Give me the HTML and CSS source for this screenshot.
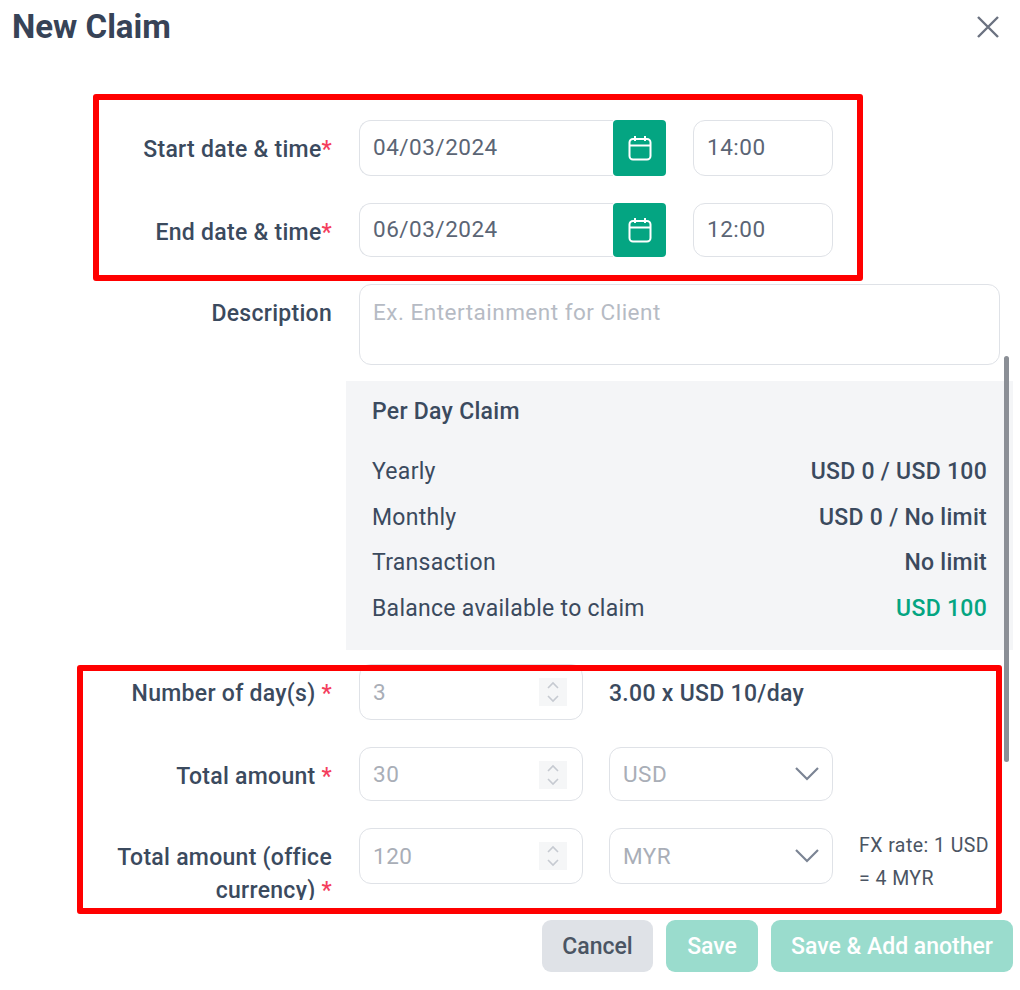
FILE: index.html
```html
<!DOCTYPE html>
<html lang="en">
<head>
  <meta charset="utf-8">
  <title>New Claim</title>
  <link rel="stylesheet" href="styles.css">
</head>
<body>
  <div class="modal">
    <header class="modal-head">
      <h1>New Claim</h1>
      <svg class="close" width="24" height="24" viewBox="0 0 24 24"><path d="M2 2L22 22M22 2L2 22"/></svg>
    </header>

    <main class="modal-body">
      <div class="row">
        <div class="label">Start date &amp; time<span class="req">*</span></div>
        <div class="date">
          <div class="field date-text">04/03/2024</div>
          <div class="cal-btn">
            <svg width="26" height="28" viewBox="0 0 26 28"><rect x="2.5" y="5" width="21" height="20.5" rx="3.5"/><path d="M2.5 11.5H23.5M8 2V7M18 2V7"/></svg>
          </div>
        </div>
        <div class="field time">14:00</div>
      </div>

      <div class="row short">
        <div class="label">End date &amp; time<span class="req">*</span></div>
        <div class="date">
          <div class="field date-text">06/03/2024</div>
          <div class="cal-btn">
            <svg width="26" height="28" viewBox="0 0 26 28"><rect x="2.5" y="5" width="21" height="20.5" rx="3.5"/><path d="M2.5 11.5H23.5M8 2V7M18 2V7"/></svg>
          </div>
        </div>
        <div class="field time">12:00</div>
      </div>

      <div class="row desc-row">
        <div class="label">Description</div>
        <div class="field textarea">Ex. Entertainment for Client</div>
      </div>

      <section class="summary">
        <h2>Per Day Claim</h2>
        <div class="summary-row"><span>Yearly</span><b>USD 0 / USD 100</b></div>
        <div class="summary-row"><span>Monthly</span><b>USD 0 / No limit</b></div>
        <div class="summary-row"><span>Transaction</span><b>No limit</b></div>
        <div class="summary-row"><span>Balance available to claim</span><b class="green">USD 100</b></div>
      </section>

      <div class="row">
        <div class="label">Number of day(s) <span class="req">*</span></div>
        <div class="field number disabled">3
          <span class="stepper"><svg width="16" height="24" viewBox="0 0 16 24"><path d="M3 8L8 3L13 8M3 16L8 21L13 16"/></svg></span>
        </div>
        <div class="rate">3.00 x USD 10/day</div>
      </div>

      <div class="row short">
        <div class="label">Total amount <span class="req">*</span></div>
        <div class="field number disabled">30
          <span class="stepper"><svg width="16" height="24" viewBox="0 0 16 24"><path d="M3 8L8 3L13 8M3 16L8 21L13 16"/></svg></span>
        </div>
        <div class="field select disabled">USD
          <svg width="26" height="16" viewBox="0 0 26 16"><path d="M2 2L13 13L24 2"/></svg>
        </div>
      </div>

      <div class="row">
        <div class="label">Total amount (office currency) <span class="req">*</span></div>
        <div class="field number disabled">120
          <span class="stepper"><svg width="16" height="24" viewBox="0 0 16 24"><path d="M3 8L8 3L13 8M3 16L8 21L13 16"/></svg></span>
        </div>
        <div class="field select disabled">MYR
          <svg width="26" height="16" viewBox="0 0 26 16"><path d="M2 2L13 13L24 2"/></svg>
        </div>
        <div class="fx">FX rate: 1 USD = 4 MYR</div>
      </div>
    </main>

    <footer class="modal-foot">
      <div class="btn cancel">Cancel</div>
      <div class="btn save">Save</div>
      <div class="btn save wide">Save &amp; Add another</div>
    </footer>

    <div class="scrollbar"></div>
    <div class="mark mark-dates"></div>
    <div class="mark mark-amounts"></div>
  </div>
</body>
</html>
```

FILE: styles.css
```css
* {
  box-sizing: border-box;
}

body {
  margin: 0;
  background: #fff;
  font-family: Roboto, "Liberation Sans", sans-serif;
  color: #3b4a5e;
}

.modal {
  position: relative;
  height: 990px;
  overflow: hidden;
}

.modal-head {
  height: 120px;
  padding: 7px 20px 0 12px;
  display: flex;
  justify-content: space-between;
  align-items: flex-start;
}

.modal-head h1 {
  margin: 0;
  font-size: 33px;
  line-height: 40px;
  font-weight: 700;
  color: #374357;
}

.close {
  margin-top: 8px;
}

.close path {
  fill: none;
  stroke: #6b7280;
  stroke-width: 2.4;
}

.modal-body {
  height: 780px;
  overflow: hidden;
  padding-left: 100px;
}

.row {
  display: flex;
  gap: 26px;
  height: 56px;
  margin-bottom: 27px;
}

.row.short {
  height: 54px;
}

.row .label {
  flex: none;
  width: 232px;
  margin-right: 1px;
  padding-top: 13px;
  font-size: 23px;
  line-height: 33px;
  letter-spacing: 0.28px;
  font-weight: 500;
  text-align: right;
}

.req {
  color: #f43f5e;
}

.field {
  height: 100%;
  border: 1.5px solid #dfe2e7;
  border-radius: 12px;
  background: #fff;
  display: flex;
  align-items: center;
  padding: 0 13px 2px;
  font-size: 22.5px;
  color: #5b6575;
  letter-spacing: 0.5px;
}

.date {
  display: flex;
  width: 307px;
}

.date-text {
  flex: 1;
  border-right: 0;
  border-radius: 12px 0 0 12px;
}

.cal-btn {
  width: 53px;
  background: #04a582;
  border-radius: 4px;
  display: flex;
  align-items: center;
  justify-content: center;
}

.cal-btn svg {
  fill: none;
  stroke: #fff;
  stroke-width: 2;
}

.time {
  width: 140px;
  margin-left: 1px;
}

.row.desc-row {
  height: 81px;
  margin-bottom: 16px;
}

.textarea {
  width: 641px;
  align-items: flex-start;
  padding-top: 14px;
  color: #b6bbc4;
}

.summary {
  width: 667px;
  height: 269px;
  margin-left: 246px;
  margin-bottom: 14px;
  padding: 15px 26px 0;
  background: #f4f5f7;
  font-size: 23px;
  letter-spacing: 0.28px;
}

.summary h2 {
  margin: 0 0 21px;
  font-size: 23px;
  line-height: 32px;
  font-weight: 500;
}

.summary-row {
  display: flex;
  justify-content: space-between;
  line-height: 45.5px;
}

.summary-row b {
  font-weight: 500;
}

.green {
  color: #04a582;
}

.number {
  position: relative;
  width: 224px;
}

.disabled {
  color: #a9aeb7;
  padding-bottom: 1px;
}

.stepper {
  position: absolute;
  right: 15px;
  top: 13px;
  width: 28px;
  height: 28px;
  background: #f5f6f7;
  display: flex;
  align-items: center;
  justify-content: center;
}

.stepper path {
  fill: none;
  stroke: #c6cad1;
  stroke-width: 1.6;
}

.rate {
  padding-top: 13px;
  font-size: 23px;
  line-height: 33px;
  letter-spacing: 0.3px;
  font-weight: 500;
}

.select {
  width: 224px;
  justify-content: space-between;
  padding-right: 12px;
}

.select svg {
  flex: none;
}

.select path {
  fill: none;
  stroke: #7b8494;
  stroke-width: 2.2;
}

.fx {
  width: 135px;
  padding-top: 1px;
  font-size: 19.5px;
  line-height: 33px;
  letter-spacing: 0.45px;
  color: #4b5563;
}

.modal-foot {
  height: 90px;
  padding: 20px 7px 0 0;
  display: flex;
  justify-content: flex-end;
  align-items: flex-start;
  gap: 13px;
}

.btn {
  height: 52px;
  border-radius: 9px;
  display: flex;
  align-items: center;
  justify-content: center;
  font-size: 23px;
  font-weight: 500;
}

.cancel {
  width: 111px;
  background: #dfe2e7;
  color: #4b5563;
}

.save {
  width: 92px;
  background: #9adccd;
  color: #fff;
}

.save.wide {
  width: 242px;
}

.scrollbar {
  position: absolute;
  left: 1004px;
  top: 356px;
  width: 5px;
  height: 406px;
  background: #8b8f96;
  border-radius: 3px;
}

.mark {
  position: absolute;
  border: 6px solid #f00;
  border-radius: 3px;
}

.mark-dates {
  left: 93px;
  top: 94px;
  width: 770px;
  height: 187px;
}

.mark-amounts {
  left: 77px;
  top: 665px;
  width: 925px;
  height: 249px;
}
```
